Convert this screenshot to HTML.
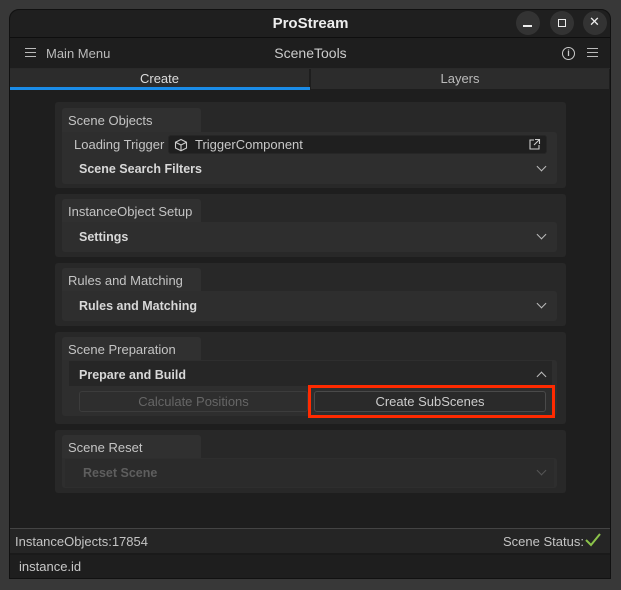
<!DOCTYPE html>
<html><head><style>
*{margin:0;padding:0;box-sizing:border-box}
body{width:621px;height:590px;background:#383838;position:relative;overflow:hidden;font-family:"Liberation Sans",sans-serif;font-size:13px;color:#c8c8c8}
.a{position:absolute}
.win{left:9px;top:9px;width:602px;height:570px;background:#1e1e1e;border-radius:10px 10px 0 0;border:1px solid #111;overflow:hidden}
.panel{position:absolute;left:55px;width:511px;background:#282828;border-radius:3px}
.tab{position:absolute;left:7px;width:139px;height:24px;background:#303030;border-radius:3px 3px 0 0;padding:5px 6px;color:#c4c4c4}
.body{position:absolute;left:7px;width:495px;background:#2e2e2e;border-radius:0 3px 3px 3px}
.row{position:absolute;left:17px;font-weight:bold;color:#d8d8d8;font-size:12.5px}
.chev{position:absolute;right:12px;width:7px;height:7px;border-right:1.3px solid #bbb;border-bottom:1.3px solid #bbb;transform:rotate(45deg)}
.circ{position:absolute;top:11px;width:24px;height:24px;border-radius:50%;background:#333}
.btn{position:absolute;height:21px;border:1px solid #4a4a4a;border-radius:3px;text-align:center;line-height:19px}
</style></head><body>
<div class="a win"></div>
<div class="a" style="left:10px;top:10px;width:600px;height:27px;background:#1f1f1f;border-radius:10px 10px 0 0"></div>
<div class="a" style="left:0;top:15px;width:621px;text-align:center;font-weight:bold;font-size:15px;color:#eee">ProStream</div>
<div class="circ" style="left:516px"></div><div class="a" style="left:523px;top:25px;width:9px;height:1.5px;background:#eee"></div>
<div class="circ" style="left:550px"></div><div class="a" style="left:558px;top:19px;width:8px;height:8px;border:1.5px solid #eee"></div>
<div class="circ" style="left:583px"></div><div class="a" style="left:589px;top:14px;font-size:13px;color:#eee">✕</div>
<div class="a" style="left:10px;top:37px;width:600px;height:1px;background:#0e0e0e"></div>
<div class="a" style="left:25px;top:48px;width:11px;height:9px;border-top:1.3px solid #bbb;border-bottom:1.3px solid #bbb"></div>
<div class="a" style="left:25px;top:52px;width:11px;height:1.3px;background:#bbb"></div>
<div class="a" style="left:46px;top:46px;color:#bbb">Main Menu</div>
<div class="a" style="left:0;top:45px;width:621px;text-align:center;font-size:14px;color:#ccc">SceneTools</div>
<div class="a" style="left:562px;top:47px;width:13px;height:13px;border:1.2px solid #ccc;border-radius:50%;font-size:9px;text-align:center;line-height:11px;color:#ccc;font-weight:bold">i</div>
<div class="a" style="left:587px;top:48px;width:11px;height:9px;border-top:1.3px solid #bbb;border-bottom:1.3px solid #bbb"></div>
<div class="a" style="left:587px;top:52px;width:11px;height:1.3px;background:#bbb"></div>
<div class="a" style="left:10px;top:68px;width:600px;height:1px;background:#2a2a2a"></div>
<div class="a" style="left:10px;top:69px;width:299px;height:20px;background:#2c2c2c;text-align:center;line-height:19px;color:#ddd">Create</div>
<div class="a" style="left:10px;top:87px;width:300px;height:3px;background:#1a8ce8"></div>
<div class="a" style="left:311px;top:69px;width:298px;height:20px;background:#2c2c2c;text-align:center;line-height:19px;color:#bbb">Layers</div>

<div class="panel" style="top:102px;height:86px">
 <div class="tab" style="top:6px">Scene Objects</div>
 <div class="body" style="top:30px;height:52px">
  <div class="a" style="left:12px;top:5px;color:#c4c4c4">Loading Trigger</div>
  <div class="a" style="left:106px;top:3px;width:379px;height:19px;background:#1f1f1f;border:1px solid #262626;border-radius:3px">
   <svg class="a" style="left:5px;top:2px" width="14" height="14" viewBox="0 0 14 14" fill="none" stroke="#ccc" stroke-width="1.1"><path d="M7 1.5L12.5 4.2V10L7 12.7L1.5 10V4.2Z M1.5 4.2L7 7L12.5 4.2 M7 7V12.7"/></svg>
   <div class="a" style="left:26px;top:1px;color:#c8c8c8">TriggerComponent</div>
   <svg class="a" style="right:5px;top:2px" width="13" height="13" viewBox="0 0 13 13" fill="none" stroke="#ccc" stroke-width="1.1"><path d="M6 2H2V11H11V7 M7 1.5H11.5V6 M11.5 1.5L6 7"/></svg>
  </div>
  <div class="row" style="top:30px">Scene Search Filters</div><div class="chev" style="top:31px"></div>
 </div>
</div>
<div class="panel" style="top:194px;height:63px">
 <div class="tab" style="top:5px">InstanceObject Setup</div>
 <div class="body" style="top:28px;height:30px"><div class="row" style="top:8px">Settings</div><div class="chev" style="top:9px"></div></div>
</div>
<div class="panel" style="top:263px;height:63px">
 <div class="tab" style="top:5px">Rules and Matching</div>
 <div class="body" style="top:28px;height:30px"><div class="row" style="top:8px">Rules and Matching</div><div class="chev" style="top:9px"></div></div>
</div>
<div class="panel" style="top:332px;height:92px">
 <div class="tab" style="top:5px">Scene Preparation</div>
 <div class="body" style="top:28px;height:56px">
  <div class="a" style="left:7px;top:1px;width:483px;height:25px;background:#262626"></div>
  <div class="row" style="top:8px">Prepare and Build</div>
  <div class="chev" style="top:13px;transform:rotate(225deg)"></div>
  <div class="btn" style="left:17px;top:31px;width:229px;color:#666;border-color:#3c3c3c">Calculate Positions</div>
  <div class="btn" style="left:252px;top:31px;width:232px;background:#2a2a2a;color:#ccc">Create SubScenes</div>
 </div>
</div>
<div class="a" style="left:308px;top:385px;width:247px;height:33px;border:3px solid #ff2a00"></div>
<div class="panel" style="top:430px;height:63px">
 <div class="tab" style="top:5px">Scene Reset</div>
 <div class="body" style="top:28px;height:30px">
  <div class="a" style="left:3px;top:1px;width:489px;height:28px;background:#2b2b2b"></div>
  <div class="row" style="left:21px;top:8px;color:#5e5e5e;font-weight:bold">Reset Scene</div><div class="chev" style="top:9px;border-color:#555"></div></div>
</div>

<div class="a" style="left:10px;top:528px;width:600px;height:1px;background:#444"></div>
<div class="a" style="left:10px;top:529px;width:600px;height:24px;background:#252525"></div>
<div class="a" style="left:15px;top:534px;color:#c4c4c4">InstanceObjects:17854</div>
<div class="a" style="left:503px;top:534px;color:#c4c4c4">Scene Status:</div>
<svg class="a" style="left:584px;top:532px" width="18" height="15" viewBox="0 0 18 15" fill="none" stroke="#8bc34a" stroke-width="2"><path d="M2 8L7 13L16 2"/></svg>
<div class="a" style="left:10px;top:553px;width:600px;height:2px;background:#1a1a1a"></div>
<div class="a" style="left:19px;top:559px;color:#c8c8c8">instance.id</div>
</body></html>
